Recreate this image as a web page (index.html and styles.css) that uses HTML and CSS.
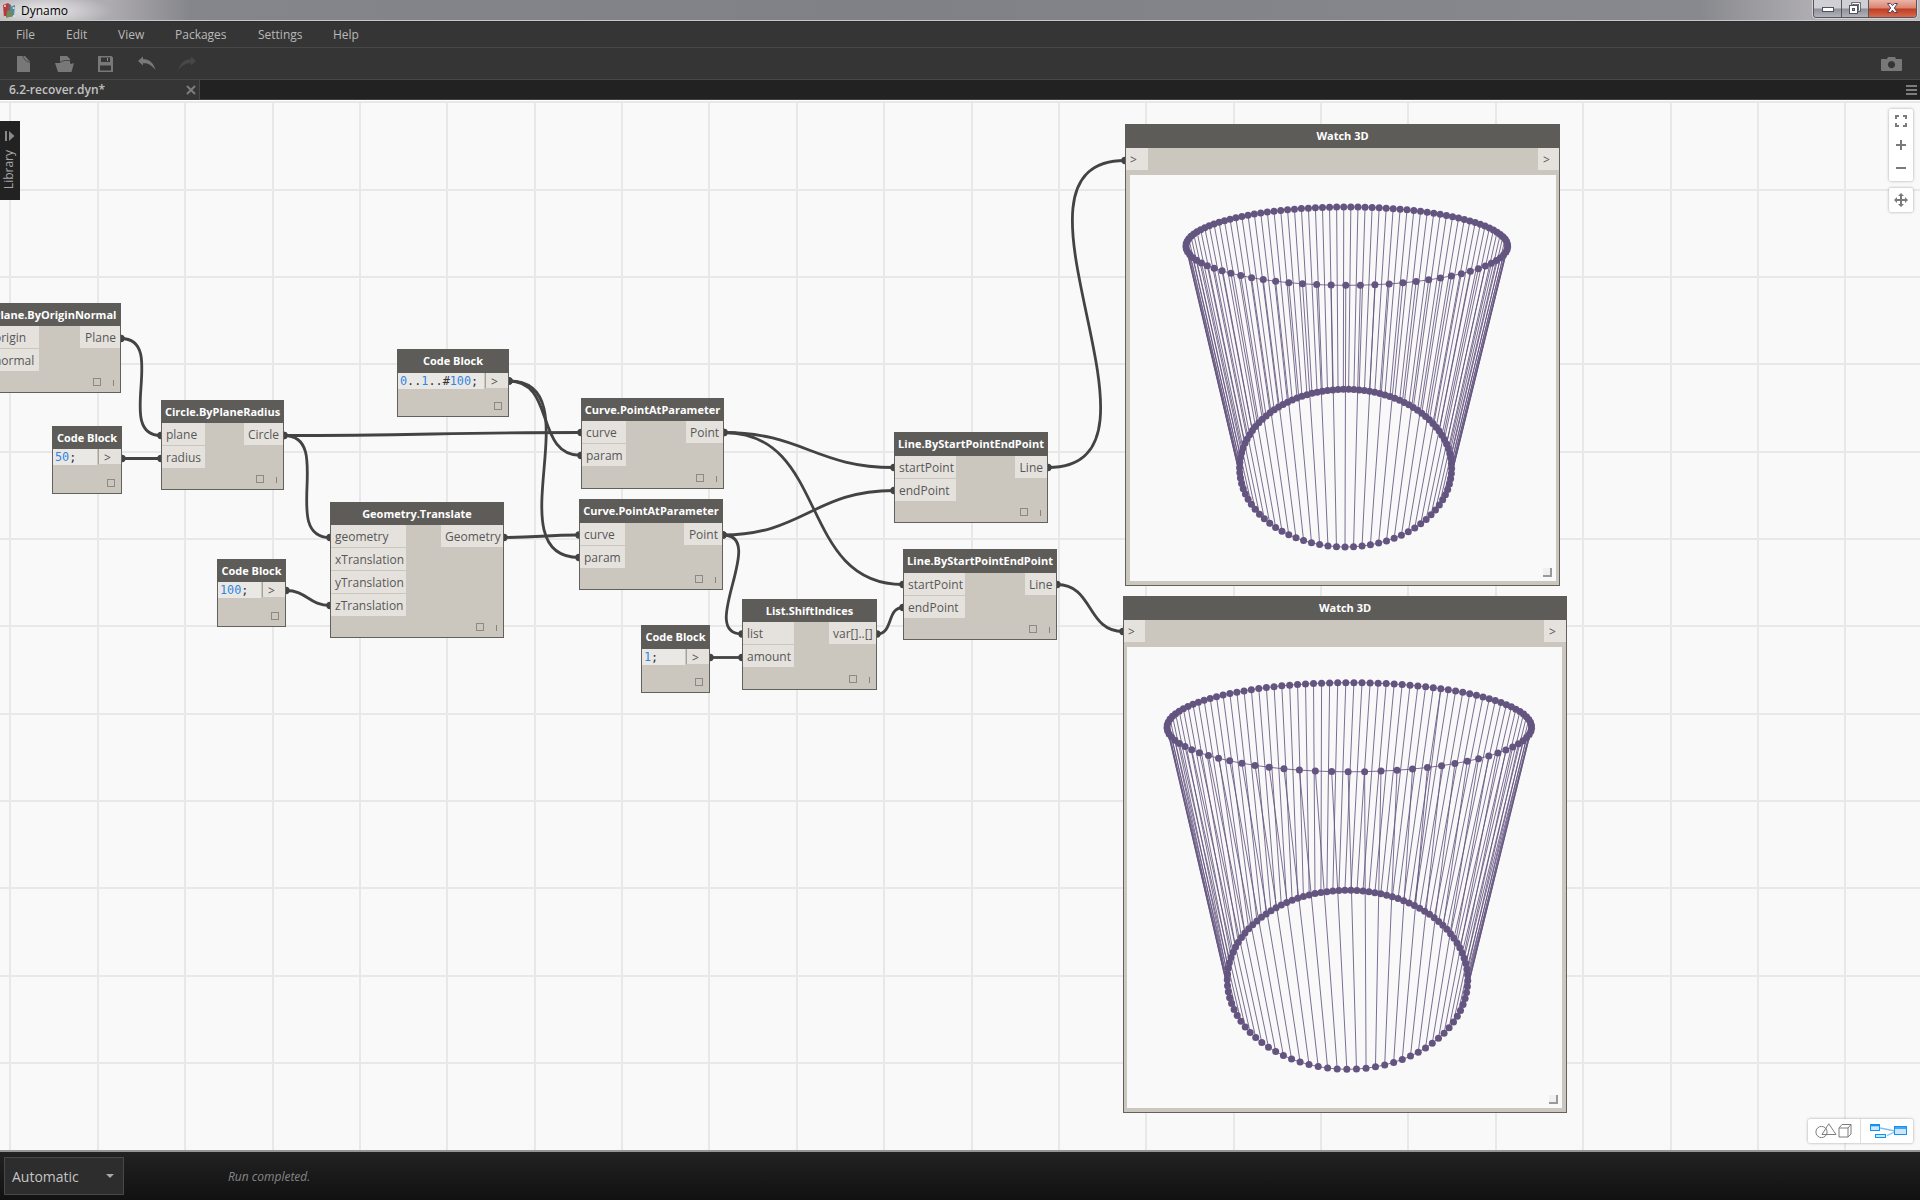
FILE: index.html
```html
<!DOCTYPE html>
<html lang="en">
<head>
<meta charset="utf-8">
<title>Dynamo</title>
<link rel="stylesheet" href="styles.css">
</head>
<body>
<div class="app">
  <header class="titlebar">
    <svg class="logo" width="14" height="18" viewBox="0 0 14 18">
      <path d="M1 3 6 1 7 14 2 16Z" fill="#b8393c"/>
      <path d="M6 1 9 3 8 12 5 9Z" fill="#8f5560"/>
      <path d="M8 5 13 3 12 14 8 15Z" fill="#4d8ba0"/>
      <path d="M5 9 9 8 11 14 4 16Z" fill="#6f8a5c"/>
      <g fill="#ece4dc"><circle cx="3" cy="4" r="1"/><circle cx="11.500" cy="6" r="1"/><circle cx="3" cy="15" r="1"/><circle cx="12" cy="14" r="1"/></g>
    </svg>
    <span class="app-name">Dynamo</span>
    <div class="window-buttons">
      <span class="wb wb-min"><svg width="12" height="6"><rect x=".5" y=".5" width="11" height="4" fill="#fff" stroke="#50525f"/></svg></span>
      <span class="wb wb-max"><svg width="13" height="13"><path d="M4.500 3V1.500h7v7H10" fill="none" stroke="#50525f" stroke-width="2.500"/><path d="M4.500 2.500v-1h7v7h-1" fill="none" stroke="#fff"/><rect x="1.500" y="3.500" width="8" height="8" fill="#fff" stroke="#50525f"/><rect x="4.500" y="6.500" width="2" height="2" fill="#aaa" stroke="#50525f"/></svg></span>
      <span class="wb wb-close"><svg width="13" height="12" viewBox="0 0 13 12"><path d="M1.500 1.500h3l2 2.200 2-2.200h3L8.300 6l3.200 4.500h-3l-2-2.300-2 2.300h-3L4.700 6Z" fill="#fff" stroke="#50445a"/></svg></span>
    </div>
  </header>
  <nav class="menu">
    <span class="m-file">File</span><span class="m-edit">Edit</span><span class="m-view">View</span><span class="m-pack">Packages</span><span class="m-set">Settings</span><span>Help</span>
  </nav>
  <div class="toolbar">
    <div class="tools">
      <svg width="14" height="17"><path d="M0 0h8l5 5.500V16H0z" fill="#787878"/><path d="M5.500 0 8.500 4.500 13 6.500" fill="none" stroke="#4a4a4a"/></svg>
      <svg width="19" height="17"><path d="M5 6V0h7l3 3v5H5z" fill="#787878"/><path d="M0 7h6l3-2h4l3 3 3-1-2.500 9H3z" fill="#787878"/><path d="M3 6h3l3-1.500h7" stroke="#353535" stroke-width=".7" fill="none"/></svg>
      <svg width="15" height="17"><path fill-rule="evenodd" d="M0 0h13.500L15 1.500V16H0zM3 1.500V6h9V1.500zM2 9.500v5h11v-5z" fill="#787878"/><rect x="9" y="2" width="1" height="3" fill="#8a8a8a"/></svg>
      <svg width="18" height="17"><path d="M0 5 5 0.500V3c6 0 10.500 3.500 12.500 11C13 8.500 10 7 5 7.200V9.500z" fill="#787878"/></svg>
      <svg width="18" height="17"><path d="M18 5 13 0.500V3C7 3 2.500 6.500.5 14 5 8.500 8 7 13 7.200V9.500z" fill="#474747"/></svg>
    </div>
    <svg class="camera" width="21" height="14"><path fill-rule="evenodd" d="M1 2h5l1-2h7l1 2h5q1 0 1 1v10q0 1-1 1H1q-1 0-1-1V3q0-1 1-1m9.500 2a3.600 3.600 0 1 0 .01 0" fill="#787878"/></svg>
  </div>
  <div class="tabs">
    <div class="tab"><span>6.2-recover.dyn*</span><svg width="10" height="10"><path d="m1 1 8 8M9 1 1 9" stroke="#7c7c7c" stroke-width="2"/></svg></div>
    <svg class="burger" width="11" height="10"><path d="M0 1h11M0 5h11M0 9h11" stroke="#7c7c7c" stroke-width="2"/></svg>
  </div>
  <main class="workspace">
    <svg class="layer" id="wires" viewBox="0 101 1920 1049"></svg>
    <div class="layer" id="nodes"></div>
    <aside class="library">
      <svg width="10" height="10"><path d="M1 0v10" stroke="#8a8a8a" stroke-width="2"/><path d="M4 0 9.500 5 4 10z" fill="#8a8a8a"/></svg>
      <span>Library</span>
    </aside>
    <div class="nav-controls">
      <div class="panel zooms">
        <svg width="12" height="12"><path d="M1 4V1h3M8 1h3v3M11 8v3H8M4 11H1V8" fill="none" stroke="#7a7a7a" stroke-width="2"/></svg>
        <svg width="10" height="10"><path d="M5 0v10M0 5h10" stroke="#7a7a7a" stroke-width="2"/></svg>
        <svg width="10" height="2"><path d="M0 1h10" stroke="#7a7a7a" stroke-width="2"/></svg>
      </div>
      <div class="panel pan">
        <svg width="14" height="14"><path d="M7 1v12M1 7h12" stroke="#7a7a7a" stroke-width="2"/><path d="m7 0 3 3H4zM7 14l3-3H4zM0 7l3-3v6zM14 7l-3-3v6z" fill="#7a7a7a"/></svg>
      </div>
    </div>
    <div class="panel views">
      <div class="view-3d"><svg width="37" height="16"><g fill="none" stroke="#7d7d7d"><circle cx="6.500" cy="9" r="5.600"/><path d="M7 11.500 13.800.8 21 11.500z"/><path d="M24 5h9v9h-9zM24 5l3-3.500h9V11l-3 3M33 5l3-3.500"/></g></svg></div>
      <div class="view-graph"><svg width="37" height="16"><path d="M10 5 25 8M17 12.500 25 9" stroke="#7cc0f5" stroke-width="1.300" fill="none"/><g fill="#cfe6fa" stroke="#0f94f5"><rect x=".5" y="1.500" width="9" height="6"/><rect x="5.500" y="11.500" width="10" height="3"/><rect x="24.500" y="3.500" width="12" height="8"/></g><path d="M0 2.500h10M24 5h13" stroke="#0f94f5" stroke-width="1.500"/></svg></div>
    </div>
  </main>
  <footer class="statusbar">
    <div class="run-mode"><span>Automatic</span><svg width="8" height="4"><path d="M0 0h8L4 4z" fill="#a8a8a8"/></svg></div>
    <span class="run-status">Run completed.</span>
  </footer>
</div>
<script src="graph.js"></script>
</body>
</html>
```
FILE: styles.css
```css
* { box-sizing: border-box; }
body { margin: 0; font-family: "Open Sans", sans-serif; overflow: hidden; }
svg { display: block; }
.app { display: flex; flex-direction: column; width: 1920px; height: 1200px; }

.titlebar {
  display: flex; height: 22px; padding-left: 2px;
  background: radial-gradient(ellipse 70px 18px at 42px 11px, rgba(255,255,255,.75), transparent),
    linear-gradient(90deg, #b4b1b4 0, #aeabb0 110px, #85868b 190px, #808187 900px, #88898e 1700px, #b0aeb3 1815px, #bbb9bd);
  border-bottom: 1px solid #2c2c2c; box-shadow: inset 0 -1px #c9c9c9;
}
.logo { margin-top: 2px; }
.app-name { margin-left: 5px; font: 12px/21px "Open Sans", sans-serif; color: #000; }
.window-buttons { display: flex; margin-left: auto; margin-right: 3px; height: 18px; border: 1px solid #55565c; border-top: 0; border-radius: 0 0 4px 4px; overflow: hidden; box-shadow: 0 0 0 1px #d4d2d6; }
.wb { display: grid; place-items: center; padding-bottom: 1px; border-right: 1px solid #55565c; background: linear-gradient(#cfcfd4 0 48%, #8e8f98 52%, #b3b3ba); }
.wb-min { width: 28px; padding-top: 4px; }
.wb-max { width: 27px; padding-right: 2px; }
.wb-close { width: 47px; border: 0; background: linear-gradient(#eab5a6, #d98370 48%, #bd3c23 52%, #d8694c); }

.menu { display: flex; height: 26px; padding-left: 16px; background: #353535; border-bottom: 1px solid #474747; color: #b9b9b9; font-size: 12px; line-height: 26px; }
.m-file { width: 50px; } .m-edit { width: 52px; } .m-view { width: 57px; } .m-pack { width: 83px; } .m-set { width: 75px; }
.toolbar { display: flex; justify-content: space-between; height: 32px; padding: 8px 18px 0 17px; background: #353535; border-bottom: 1px solid #474747; }
.tools { display: grid; grid-template-columns: 38px 43px 40px 40px 20px; }
.camera { margin-top: 1px; }
.tabs { display: flex; justify-content: space-between; align-items: center; height: 20px; padding-right: 3px; background: #222; border-bottom: 1px solid #3f3f3f; }
.tab { display: flex; align-items: center; justify-content: space-between; width: 200px; height: 20px; padding: 0 3px 0 9px; background: #353535; border-right: 1px solid #474747; color: #c2c2c2; font-size: 12px; font-weight: 600; }

.workspace { position: relative; flex: 1; background: #f9f9f9; border-top: 1px solid #fff; overflow: hidden; }
.layer { position: absolute; left: 0; top: 0; width: 1920px; height: 1049px; }
.node { position: absolute; display: flex; flex-direction: column; background: #cbc6be; border: 1px solid #62615d; border-top: 0; }
.node-title { margin: 0 -1px; background: #5e5c59; color: #fff; font-size: 11px; font-weight: 700; line-height: 24px; text-align: center; white-space: nowrap; flex: none; }
.ports { display: flex; justify-content: space-between; }
.col { display: flex; flex-direction: column; gap: 1px; }
.port { height: 22px; background: #e5e2dd; color: #575757; font-size: 12px; line-height: 23px; padding: 0 4px; white-space: nowrap; }
.col.out .port { text-align: right; }
.view-node .col.out .port { text-align: left; padding-left: 5px; }
.code-row { display: flex; gap: 1px; }
.code { flex: 1; height: 16px; background: #eae8e5; padding-left: 2px; font: 11.8px/16px "DejaVu Sans Mono", monospace; color: #333; white-space: pre; }
.code b { font-weight: 400; color: #2f86e2; }
.code-out { width: 23px; height: 15px; padding-left: 5px; border-left: 1px solid #a5a29d; background: #e5e2dd; color: #505050; font-size: 12px; line-height: 17px; }
.node-foot { display: flex; justify-content: flex-end; align-items: flex-end; gap: 12px; margin-top: auto; padding: 0 6px 6px 0; }
.box { width: 8px; height: 8px; border: 1px solid #8d8983; }
.lace { width: 1px; height: 6px; background: #86827c; }
.view { position: relative; flex: 1; background: #f9f9f9; }
.view .scene { width: 100%; height: 100%; overflow: visible; }
.grip { position: absolute; right: 4px; bottom: 4px; width: 9px; height: 9px; background: #f0f0f0; border: solid #999; border-width: 0 2px 2px 0; }

.library { position: absolute; left: 0; top: 20px; width: 20px; height: 79px; padding-top: 10px; background: #222; display: flex; flex-direction: column; align-items: center; gap: 9px; color: #a6a6a6; font-size: 12px; }
.library svg { flex: none; }
.library span { writing-mode: vertical-rl; transform: rotate(180deg); line-height: 18px; margin-right: 3px; }
.nav-controls { position: absolute; right: 7px; top: 8px; display: flex; flex-direction: column; gap: 7px; }
.panel { background: #fff; border-radius: 2px; box-shadow: 0 0 3px rgba(0,0,0,.35); }
.zooms { width: 24px; height: 72px; padding-top: 6px; display: flex; flex-direction: column; align-items: center; gap: 13px; }
.zooms svg + svg + svg { margin-top: 4px; }
.pan { width: 24px; height: 24px; display: grid; place-items: center; }
.views { position: absolute; right: 7px; bottom: 7px; width: 105px; height: 24px; display: flex; }
.view-3d { width: 53px; padding: 4px 0 0 7px; border-right: 1px solid #ddd; }
.view-graph { padding: 4px 0 0 9px; }

.statusbar { display: flex; align-items: center; height: 50px; border-top: 2px solid #959595; background: linear-gradient(#222, #111); }
.run-mode { display: flex; align-items: center; justify-content: space-between; width: 120px; height: 38px; margin-left: 4px; padding: 0 9px 0 7px; background: #2d2d2d; border: 1px solid #484848; color: #c4c4c4; font-size: 14px; }
.run-status { margin-left: 104px; font-size: 12px; font-style: italic; color: #868686; }
```
FILE: graph.js
```js
const TOP = 101;
const NS = 'http://www.w3.org/2000/svg';

// b: left, top, right, bottom, header bottom; iw / ow: inner edges of the port columns
const nodes = [
  { t: 'Plane.ByOriginNormal', b: [-11, 303, 121, 393, 326], i: ['origin', 'normal'], o: 'Plane', iw: 39, ow: 80 },
  { t: 'Circle.ByPlaneRadius', b: [161, 400, 284, 490, 423], i: ['plane', 'radius'], o: 'Circle', iw: 205, ow: 244 },
  { t: 'Code Block', b: [52, 426, 122, 494, 449], code: '50;' },
  { t: 'Geometry.Translate', b: [330, 502, 504, 638, 525], i: ['geometry', 'xTranslation', 'yTranslation', 'zTranslation'], o: 'Geometry', iw: 406, ow: 441 },
  { t: 'Code Block', b: [217, 559, 286, 627, 582], code: '100;' },
  { t: 'Code Block', b: [397, 349, 509, 417, 373], code: '0..1..#100;' },
  { t: 'Curve.PointAtParameter', b: [581, 398, 724, 489, 421], i: ['curve', 'param'], o: 'Point', iw: 626, ow: 686 },
  { t: 'Curve.PointAtParameter', b: [579, 499, 723, 590, 523], i: ['curve', 'param'], o: 'Point', iw: 625, ow: 684 },
  { t: 'Code Block', b: [641, 625, 710, 693, 649], code: '1;' },
  { t: 'List.ShiftIndices', b: [742, 599, 877, 690, 622], i: ['list', 'amount'], o: 'var[]..[]', iw: 794, ow: 829 },
  { t: 'Line.ByStartPointEndPoint', b: [894, 432, 1048, 523, 456], i: ['startPoint', 'endPoint'], o: 'Line', iw: 956, ow: 1015 },
  { t: 'Line.ByStartPointEndPoint', b: [903, 549, 1057, 640, 573], i: ['startPoint', 'endPoint'], o: 'Line', iw: 965, ow: 1025 },
  { t: 'Watch 3D', b: [1125, 124, 1560, 586, 148], i: ['>'], o: '>', iw: 1148, ow: 1538,
    scene: { frame: [1130, 175, 1556, 581], shift: 0,
      top: { cx: 1346.8, r: 150.9, k: .347, back: 207, front: 285.3 },
      bottom: { cx: 1345.6, r: 103, k: .237, back: 389.3, front: 547 } } },
  { t: 'Watch 3D', b: [1123, 596, 1567, 1113, 620], i: ['>'], o: '>', iw: 1145, ow: 1544,
    scene: { frame: [1127, 647, 1562, 1108], shift: 1,
      top: { cx: 1349.3, r: 171.3, k: .342, back: 682.7, front: 771.8 },
      bottom: { cx: 1347.5, r: 117, k: .231, back: 890.3, front: 1069.3 } } },
];

const wires = [
  [121, 338.5, 161, 435.5], [122, 458.5, 161, 458.5], [284, 435.5, 581, 432.5],
  [284, 435.5, 330, 537.5], [286, 590.5, 330, 605.5], [504, 537.5, 579, 535],
  [509, 381, 581, 455.5], [509, 381, 579, 557.5], [724, 432.5, 894, 467.5],
  [724, 432.5, 903, 584.5], [723, 535, 894, 490.5], [723, 535, 742, 634],
  [710, 657.5, 742, 657.5], [877, 634, 903, 607.5], [1048, 467.5, 1125, 160.5],
  [1057, 584.5, 1123, 631.5],
];

function el(tag, cls, text) {
  const e = document.createElement(tag);
  e.className = cls;
  if (text !== undefined) e.textContent = text;
  return e;
}

// Grid lines and connectors
let s = '<g fill="#e8e8e8">';
for (let k = 0; k < 22; k++) s += `<rect x="${Math.round(10.4 + 87.38 * k) - 1}" y="101" width="2" height="1049"/>`;
for (let k = 0; k < 12; k++) s += `<rect x="0" y="${Math.round(102.2 + 87.35 * k) - 1}" width="1920" height="2"/>`;
s += '</g><g fill="none" stroke="#434343" stroke-width="2.8">';
let dots = '';
for (const [x1, y1, x2, y2] of wires) {
  const off = .45 * Math.hypot(x2 - x1, y2 - y1);
  s += `<path d="M${x1} ${y1}C${x1 + off} ${y1} ${x2 - off} ${y2} ${x2} ${y2}"/>`;
  dots += `<circle cx="${x1}" cy="${y1}" r="3.7"/><circle cx="${x2}" cy="${y2}" r="3.7"/>`;
}
document.getElementById('wires').innerHTML = s + '</g><g fill="#434343">' + dots + '</g>';

// Perspective projection of a horizontal ring of 99 distinct points
function ring({ cx, r, k, back, front }) {
  const lo = back * (1 + k), hi = front * (1 - k), A = (lo + hi) / 2, B = (hi - lo) / 2;
  return Array.from({ length: 99 }, (_, i) => {
    const u = (i - .07) * 2 * Math.PI / 99, c = Math.cos(u), w = 1 - k * c;
    return [cx + r * Math.sin(u) / w, (A + B * c) / w];
  });
}

function scene({ frame: [x1, y1, x2, y2], shift, top, bottom }) {
  const svg = document.createElementNS(NS, 'svg');
  svg.setAttribute('class', 'scene');
  svg.setAttribute('viewBox', `${x1} ${y1} ${x2 - x1} ${y2 - y1}`);
  const a = ring(top), b = ring(bottom);
  let lines = '', pts = '';
  const f = n => n.toFixed(2);
  a.forEach((p, i) => { const q = b[(i + shift) % 99]; lines += `M${f(p[0])} ${f(p[1])}L${f(q[0])} ${f(q[1])}`; });
  if (shift) lines += `M${a[38]}L${b[38]}`;
  for (const g of [a, b]) {
    lines += 'M' + g.map(p => p.map(f).join(' ')).join('L') + 'Z';
    for (const p of g) pts += `<circle cx="${f(p[0])}" cy="${f(p[1])}" r="3.5"/>`;
  }
  svg.innerHTML = `<path d="${lines}" fill="none" stroke="#645580" stroke-width=".85"/><g fill="#645580">${pts}</g>`;
  return svg;
}

const host = document.getElementById('nodes');
for (const n of nodes) {
  const [x, y, r, b, hb] = n.b;
  const node = el('section', n.scene ? 'node view-node' : 'node');
  node.style.cssText = `left:${x}px;top:${y - TOP}px;width:${r - x}px;height:${b - y}px`;
  const title = el('div', 'node-title', n.t);
  title.style.height = hb - y + 'px';
  node.append(title);
  if (n.code) {
    const row = el('div', 'code-row'), code = el('div', 'code');
    code.innerHTML = n.code.replace(/\d+/g, '<b>$&</b>');
    row.append(code, el('div', 'code-out', '>'));
    node.append(row);
  } else {
    const ports = el('div', 'ports'), ins = el('div', 'col'), out = el('div', 'col out');
    ins.style.width = n.iw - x - 1 + 'px';
    out.style.width = r - 1 - n.ow + 'px';
    n.i.forEach(p => ins.append(el('div', 'port', p)));
    out.append(el('div', 'port', n.o));
    ports.append(ins, out);
    node.append(ports);
  }
  if (n.scene) {
    const [vx, vy, vr, vb] = n.scene.frame;
    const view = el('div', 'view');
    view.style.margin = `${vy - hb - 22}px ${r - 1 - vr}px ${b - 1 - vb}px ${vx - x - 1}px`;
    view.append(scene(n.scene), el('div', 'grip'));
    node.append(view);
  } else {
    const foot = el('div', 'node-foot');
    foot.append(el('span', 'box'));
    if (!n.code) foot.append(el('span', 'lace'));
    node.append(foot);
  }
  host.append(node);
}
```
